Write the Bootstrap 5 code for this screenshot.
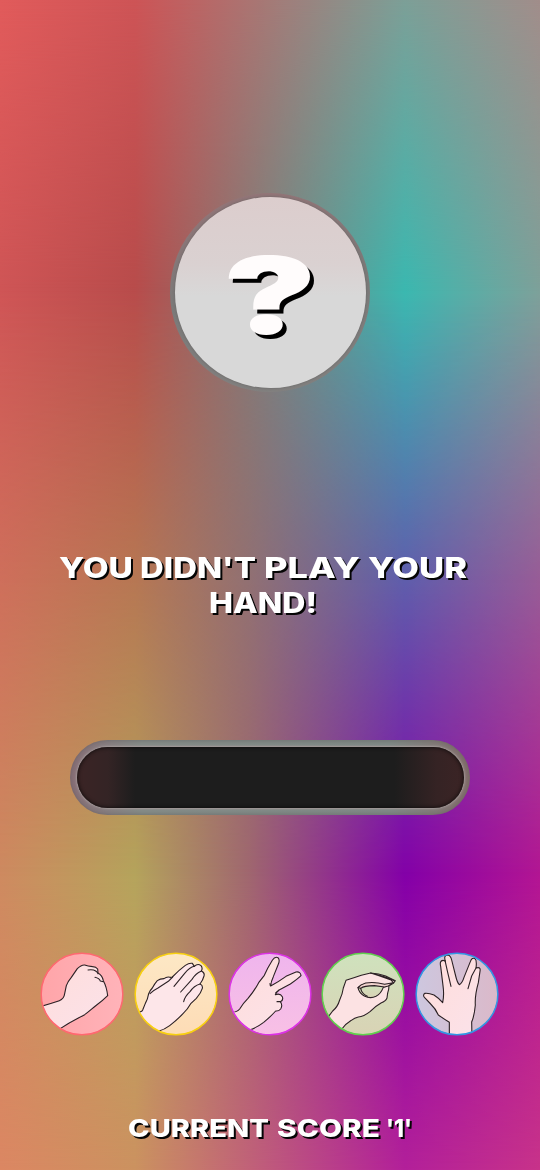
<!DOCTYPE html>
<html lang="en">
<head>
<meta charset="utf-8">
<meta name="viewport" content="width=device-width, initial-scale=1">
<title>Current score</title>
<link href="https://cdn.jsdelivr.net/npm/bootstrap@5.3.0/dist/css/bootstrap.min.css" rel="stylesheet">
<style>
html,body{margin:0;height:1170px;overflow:hidden}
.stage{width:540px;height:1170px;font-family:Inter,"Liberation Sans",sans-serif}
/* four horizontal colour bands blended vertically into one mesh */
.mesh{z-index:0}
.mesh div{position:absolute;inset:0}
.m4{background:linear-gradient(90deg,#dc8763,#cc9260 25%,#b3209a 75%,#c8338a)}
.m3{background:linear-gradient(90deg,#ce8a60,#b5a45c 25%,#a0676f 46%,#8400a8 75%,#b31593);-webkit-mask-image:linear-gradient(#000 75%,transparent);mask-image:linear-gradient(#000 75%,transparent)}
.m2{background:linear-gradient(90deg,#cf5556,#b84c4b 25%,#3bb8b0 75%,#7da19a);-webkit-mask-image:linear-gradient(#000 25%,transparent 75%);mask-image:linear-gradient(#000 25%,transparent 75%)}
.m1{background:linear-gradient(90deg,#e15b5b,#cd5456 25%,#7c9f97 75%,#a18d8a);-webkit-mask-image:linear-gradient(#000,transparent 25%);mask-image:linear-gradient(#000,transparent 25%)}
.content{z-index:1;padding-top:193px}
.orb{width:200px;height:199px;padding:4px 4.5px;background:linear-gradient(170deg,#967477,#7b7a79 48%,#838180)}
.orb-face{background:linear-gradient(#dccdcd,#dad1d1 35%,#d8d8d8 52%,#d8d8d8);box-shadow:0 0 3px #666}
.shade{filter:drop-shadow(2.3px 2.3px 0 #050505)}
.orb .shade{filter:drop-shadow(4.5px 4.5px 0 #000)}
.msg{margin-top:152px;height:84px}
.pill{margin-top:112px;width:400px;height:75px;padding:7px 6.5px;background:linear-gradient(90deg,#8a7078,#858c88 18%,#7f8986 80%,#86706e);box-shadow:inset 0 0 5px #5559}
.pill-core{background:linear-gradient(90deg,#3b2425,#342425 8%,#1d1d1d 15%,#1d1d1d 82%,#352324 93%,#3b2425);box-shadow:0 0 2px 1px #a49a9a,inset 0 0 4px #080808}
.hands{margin-top:137px;gap:9.75px;width:460px}
.hands svg{width:84px;height:84px;flex:none;margin-left:-.5px;margin-right:.5px}
.hands path{stroke:#2b2024;stroke-width:3.3;stroke-linejoin:round;stroke-linecap:round}
.score{margin-top:64px}
svg{display:block}
text{font-weight:800;fill:#fff}
.orb text{font-weight:900;fill:#fffcfc}
</style>
<script src="https://cdn.jsdelivr.net/npm/bootstrap@5.3.0/dist/js/bootstrap.bundle.min.js"></script>
</head>
<body>
<main class="stage position-relative overflow-hidden">
  <div class="mesh position-absolute top-0 start-0 w-100 h-100"><div class="m4"></div><div class="m3"></div><div class="m2"></div><div class="m1"></div></div>
  <div class="content position-relative d-flex flex-column align-items-center">
    <div class="orb rounded-circle">
      <div class="orb-face rounded-circle w-100 h-100">
        <svg class="shade" width="191" height="191" viewBox="0 0 191 191"><text x="48" y="137" font-size="107" textLength="94" lengthAdjust="spacingAndGlyphs">?</text></svg>
      </div>
    </div>
    <svg class="msg shade" width="540" height="84" viewBox="0 544 540 84" font-size="28.500" role="heading">
      <text x="59" y="578" textLength="74" lengthAdjust="spacingAndGlyphs">YOU</text>
      <text x="140" y="578" textLength="116" lengthAdjust="spacingAndGlyphs">DIDN'T</text>
      <text x="264" y="578" textLength="96" lengthAdjust="spacingAndGlyphs">PLAY</text>
      <text x="368" y="578" textLength="99" lengthAdjust="spacingAndGlyphs">YOUR</text>
      <text x="209" y="613" textLength="108" lengthAdjust="spacingAndGlyphs">HAND!</text>
    </svg>
    <div class="pill rounded-pill"><div class="pill-core rounded-pill w-100 h-100"></div></div>
    <div class="hands d-flex justify-content-center">
      <svg viewBox="14 19 252 252">
        <defs>
          <clipPath id="k"><circle cx="140" cy="145" r="122"/></clipPath>
          <linearGradient id="skin" x2="1" y2="1"><stop stop-color="#ffddda"/><stop offset="1" stop-color="#fbe2ea"/></linearGradient>
          <linearGradient id="g1"><stop stop-color="#ffa5a9"/><stop offset="1" stop-color="#ffb3b9"/></linearGradient>
          <linearGradient id="g2" x2="0" y2="1"><stop stop-color="#fde8c5"/><stop offset="1" stop-color="#fddcb6"/></linearGradient>
          <linearGradient id="g3" x2="0" y2="1"><stop stop-color="#efb5ed"/><stop offset="1" stop-color="#f8c0e5"/></linearGradient>
          <linearGradient id="g4" x2="0" y2="1"><stop stop-color="#cfe2bd"/><stop offset="1" stop-color="#d9d3b5"/></linearGradient>
          <linearGradient id="g5"><stop stop-color="#cdc7df"/><stop offset="1" stop-color="#dbb9c9"/></linearGradient>
        </defs>
        <circle cx="140" cy="145" r="122" fill="url(#g1)"/>
        <g clip-path="url(#k)"><path fill="url(#skin)" d="M10 184C45 174 60 169 72 165Q86 160 88 144L93 120Q97 108 108 95L126 69Q138 57 148 58Q157 62 172 63Q182 63 187 70L188 82Q201 89 204 105Q214 123 217 150C206 161 195 170 184 178C171 188 160 199 148 207C128 217 98 233 70 252"/><path fill="none" d="M158 73Q174 71 181 76Q188 81 188 84M179 95Q192 98 195 106L204 108"/></g>
        <circle cx="140" cy="145" r="122.500" fill="none" stroke="#ff6870" stroke-width="4.500"/>
      </svg>
      <svg viewBox="13 19 252 252">
        <circle cx="139" cy="145" r="122" fill="url(#g2)"/>
        <g clip-path="url(#k)"><path fill="#fde6e9" d="M20 201Q36 200 39 193L47 173Q54 162 57 144Q61 134 68 127Q75 114 83 105Q91 99 103 99Q112 92 121 95L128 94Q148 73 167 59Q179 51 188 53L194 62Q204 52 214 60Q220 67 215 76Q226 81 223 91Q220 103 211 115Q220 118 218 128Q214 142 200 158L184 173Q174 191 160 204Q143 222 120 240Q104 252 86 257"/><path fill="none" d="M61 144Q71 134 85 127L116 107L129 94M194 62Q180 65 165 83L133 122M214 77Q199 83 187 101L153 139M211 115Q193 120 181 138Q165 153 162 168"/></g>
        <circle cx="139" cy="145" r="122.500" fill="none" stroke="#f8d010" stroke-width="4.500"/>
      </svg>
      <svg viewBox="12 19 252 252">
        <circle cx="138" cy="145" r="122" fill="url(#g3)"/>
        <g clip-path="url(#k)"><path fill="url(#skin)" d="M23 201Q40 199 47 190Q56 174 72 158Q91 136 104 111L121 89Q130 68 145 44Q153 31 162 36Q169 43 162 58L148 93Q141 107 140 121Q167 106 186 92L216 79Q230 77 231 90Q221 100 199 115L164 134Q156 140 154 147Q169 142 175 153Q179 164 169 168Q177 179 170 190Q164 197 155 196Q140 213 119 230Q98 246 77 253"/><path fill="none" d="M138 114L139 120M164 134L155 142M169 168L159 168"/></g>
        <circle cx="138" cy="145" r="122.500" fill="none" stroke="#dc32e6" stroke-width="4.500"/>
      </svg>
      <svg viewBox="14 19 252 252">
        <circle cx="140" cy="145" r="122" fill="url(#g4)"/>
        <g clip-path="url(#k)"><path fill="#fce2e3" d="M34 216L49 196Q64 184 70 163Q79 143 81 127L89 104Q112 97 135 89L163 82Q187 83 208 91L237 105L231 113L218 120L217 131Q213 142 212 157Q208 167 194 172Q176 182 161 198Q142 213 126 214Q115 217 105 224Q88 234 74 253"/><path fill="url(#g4)" d="M125 126Q133 117 145 115L174 112L205 120Q213 122 201 125Q193 145 179 152Q162 160 144 151Q128 142 125 126Z"/><path fill="#f1d3ce" d="M125 126Q133 116 148 112Q176 108 205 116L230 111L216 121L205 124L174 120Q143 120 133 128Z"/><path fill="none" d="M163 82L188 90L224 103L231 111M176 85L210 95L234 105M133 128Q136 144 153 152"/></g>
        <circle cx="140" cy="145" r="122.500" fill="none" stroke="#60d04d" stroke-width="4.500"/>
      </svg>
      <svg viewBox="14 19 252 252">
        <circle cx="140" cy="145" r="122" fill="url(#g5)"/>
        <g clip-path="url(#k)"><path fill="url(#skin)" d="M117 280L117 230Q98 218 84 208Q75 188 61 175L43 156Q36 148 44 143Q56 142 71 148Q85 157 97 171Q102 147 98 120L91 62Q87 45 98 44L105 47Q99 28 113 28Q121 30 124 43L136 91Q141 112 147 117Q156 112 161 95L180 48Q185 34 194 39Q200 44 197 67Q212 62 209 77L204 111Q193 151 195 178Q192 211 184 229L185 280"/><path fill="none" d="M104 44L112 80L122 122M197 67L184 91L173 129"/></g>
        <circle cx="140" cy="145" r="122.500" fill="none" stroke="#3297e4" stroke-width="4.500"/>
      </svg>
    </div>
    <svg class="score shade" width="540" height="50" viewBox="0 1100 540 50" font-size="25">
      <text x="128" y="1136.500" textLength="141" lengthAdjust="spacingAndGlyphs">CURRENT</text>
      <text x="277" y="1136.500" textLength="103" lengthAdjust="spacingAndGlyphs">SCORE</text>
      <text x="386" y="1136.500" textLength="26" lengthAdjust="spacingAndGlyphs">'1'</text>
    </svg>
  </div>
</main>
</body>
</html>
